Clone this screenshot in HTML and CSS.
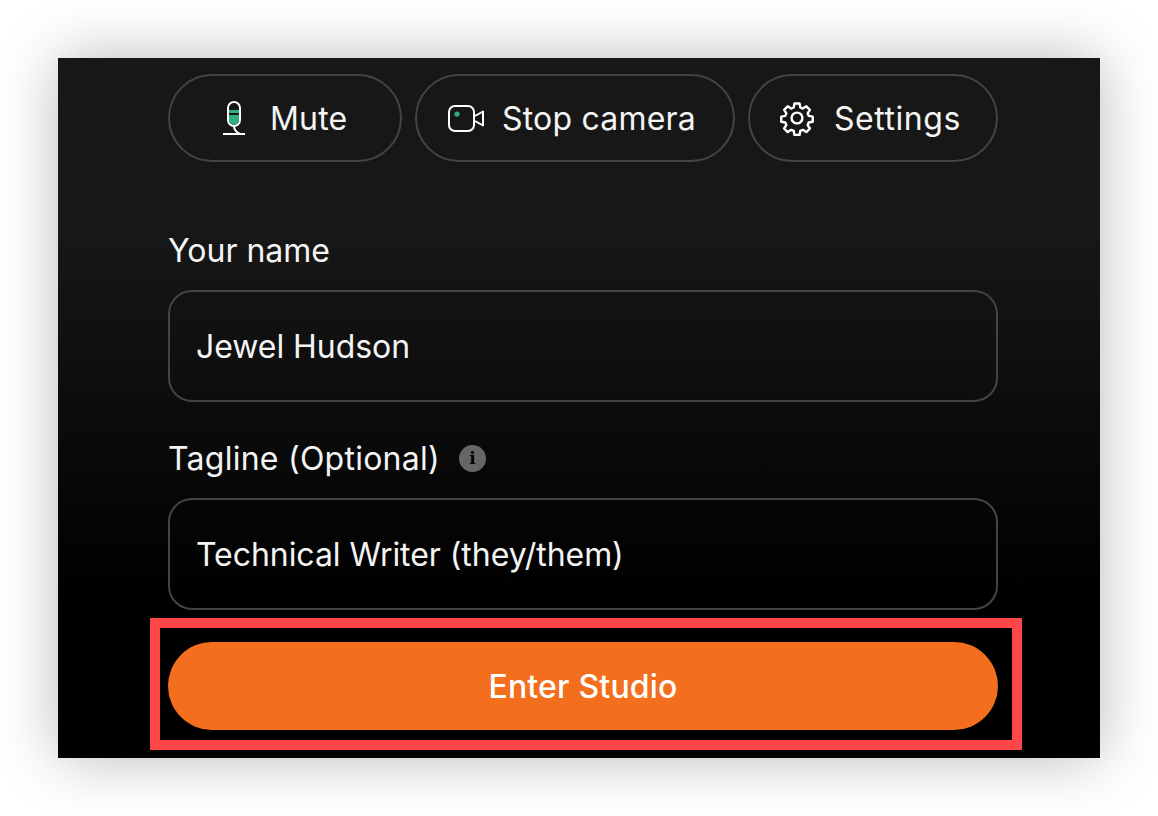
FILE: index.html
```html
<!DOCTYPE html>
<html lang="en">
<head>
    <meta charset="UTF-8">
    <meta name="viewport" content="width=device-width, initial-scale=1.0">
    <title>Enter Studio</title>
    <link rel="stylesheet" href="styles.css">
</head>
<body>
    <div class="panel">
        <div class="controls">
            <button class="control control-mute">
                <svg class="icon" width="28" height="40" viewBox="0 0 28 40" fill="none">
                    <rect x="8" y="4" width="12" height="24" rx="6" stroke="#fff" stroke-width="2"/>
                    <path d="M9 12h10v3H9z" fill="#2fae7e"/>
                    <path d="M9 17h10v5a5 5 0 0 1-10 0z" fill="#2fae7e"/>
                    <path d="M14 28c0 4 2 6 6 8M3 36h22" stroke="#fff" stroke-width="2"/>
                </svg>
                Mute
            </button>
            <button class="control control-camera">
                <svg class="icon" width="36" height="27" viewBox="0 0 36 27" fill="none">
                    <rect x="1" y="1" width="25" height="25" rx="6" stroke="#fff" stroke-width="2"/>
                    <circle cx="9" cy="9" r="2.6" fill="#2fae7e"/>
                    <path d="M27 11l8-4.500v14l-8-4.500" stroke="#fff" stroke-width="2" stroke-linejoin="round"/>
                </svg>
                Stop camera
            </button>
            <button class="control control-settings">
                <svg class="icon" width="36" height="36" viewBox="0 0 24 24" fill="none" stroke="#fff" stroke-width="1.6" stroke-linejoin="round">
                    <circle cx="12" cy="12" r="3.6"/>
                    <path d="M10.300 2.300h3.400l.5 2.700 1.700.7 2.300-1.500 2.400 2.400-1.500 2.300.7 1.700 2.700.5v3.400l-2.700.5-.7 1.700 1.500 2.300-2.400 2.400-2.300-1.500-1.700.7-.5 2.700h-3.400l-.5-2.700-1.700-.7-2.300 1.500-2.400-2.400 1.500-2.300-.7-1.700-2.700-.5v-3.400l2.700-.5.7-1.700-1.500-2.300 2.400-2.400 2.300 1.500 1.700-.7z"/>
                </svg>
                Settings
            </button>
        </div>

        <label class="field-label field-name">Your name</label>
        <div class="text-input">Jewel Hudson</div>

        <label class="field-label field-tagline">
            Tagline (Optional)
            <span class="info-badge">i</span>
        </label>
        <div class="text-input">Technical Writer (they/them)</div>

        <div class="enter-wrap">
            <button class="enter-button">Enter Studio</button>
            <div class="highlight-box"></div>
        </div>
    </div>
</body>
</html>
```

FILE: styles.css
```css
* {
    box-sizing: border-box;
}

body {
    margin: 0;
    background-color: #fff;
    font-family: Inter, "Liberation Sans", sans-serif;
}

.panel {
    width: 1042px;
    height: 700px;
    margin: 58px;
    padding: 16px 102px 0 110px;
    background: linear-gradient(#171717 0, #171717 180px, #000 540px);
    box-shadow: 0 0 58px rgba(0, 0, 0, 0.28);
    color: #f4f4f4;
}

.controls {
    display: flex;
    justify-content: space-between;
}

.control {
    display: flex;
    align-items: center;
    height: 88px;
    border: 2px solid #444;
    border-radius: 44px;
    background: none;
    color: #f4f4f4;
    font-family: inherit;
    font-size: 32px;
    letter-spacing: 0.2px;
}

.control-mute {
    width: 234px;
    padding: 0 0 0 50px;
    gap: 22px;
}

.control-camera {
    width: 320px;
    padding: 0 0 0 31px;
    gap: 18px;
}

.control-settings {
    width: 250px;
    padding: 0 0 0 29px;
    gap: 19px;
    letter-spacing: 0.55px;
}

.field-label {
    display: flex;
    align-items: center;
    height: 40px;
    font-size: 32px;
}

.field-name {
    margin-top: 68px;
    margin-bottom: 20px;
}

.field-tagline {
    margin-top: 36px;
    margin-bottom: 20px;
    letter-spacing: 0.25px;
}

.info-badge {
    display: flex;
    align-items: center;
    justify-content: center;
    width: 27px;
    height: 27px;
    margin-left: 19px;
    border-radius: 50%;
    background-color: #666;
    color: #000;
    font-family: "DejaVu Serif", serif;
    font-size: 17px;
    font-weight: bold;
    letter-spacing: 0;
}

.text-input {
    display: flex;
    align-items: center;
    height: 112px;
    padding: 0 26px;
    border: 2px solid #444;
    border-radius: 24px;
    font-size: 32px;
    letter-spacing: -0.05px;
}

.enter-wrap {
    position: relative;
    margin-top: 32px;
}

.enter-button {
    display: block;
    width: 100%;
    height: 88px;
    border: none;
    border-radius: 44px;
    background-color: #f36f1e;
    color: #fff;
    font-family: inherit;
    font-size: 32px;
    font-weight: 500;
    letter-spacing: 0.2px;
}

.highlight-box {
    position: absolute;
    top: -24px;
    left: -18px;
    right: -24px;
    bottom: -20px;
    border: 10px solid #ff4545;
}
```
